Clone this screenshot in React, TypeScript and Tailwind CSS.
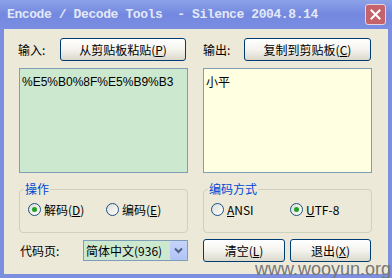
import type { ReactNode } from 'react';

const CJK = "font-['Noto_Sans_CJK_SC','Liberation_Sans',sans-serif]";

function XPButton({ children, className = '' }: { children: ReactNode; className?: string }) {
  return (
    <button
      type="button"
      className={`flex items-center justify-center rounded-[3px] border border-[#003c74] bg-gradient-to-b from-white via-[#f4f3ee] to-[#dcd9cb] text-[12px] leading-none text-black ${className}`}
    >
      {children}
    </button>
  );
}

function Radio({ checked, label, hotkey, rest }: { checked?: boolean; label: string; hotkey: string; rest: string }) {
  return (
    <label className="flex items-center gap-[3px] text-[12px] leading-none text-black">
      <span className="flex h-[13px] w-[13px] items-center justify-center rounded-full border border-[#1c5180] bg-gradient-to-br from-[#dcdcd6] to-white">
        {checked ? <span className="h-[5px] w-[5px] rounded-full bg-[#21a121]" /> : null}
      </span>
      <span>
        {label}
        <span className="underline">{hotkey}</span>
        {rest}
      </span>
    </label>
  );
}

function Group({ title, children }: { title: string; children: ReactNode }) {
  return (
    <fieldset className="h-[51px] rounded-[4px] border border-[#d0d0bf] px-[4px] pt-[7px]">
      <legend className="px-[1px] text-[12px] leading-[14px] text-[#0046d5]">{title}</legend>
      <div className="flex items-center">{children}</div>
    </fieldset>
  );
}

export default function App() {
  return (
    <div className={`relative flex h-[278px] w-[392px] flex-col overflow-hidden bg-[#7b8ee0] ${CJK}`}>
      <div className="flex h-[29px] shrink-0 items-center justify-between bg-gradient-to-b from-[#8da2e8] via-[#7388df] to-[#7a8fe2] pl-[7px] pr-[6px]">
        <span className="whitespace-pre font-['Liberation_Mono',monospace] text-[13px] font-bold tracking-[-0.4px] text-[#e3e8f8]">
          Encode / Decode Tools  - Silence 2004.8.14
        </span>
        <span className="flex h-[21px] w-[21px] items-center justify-center rounded-[3px] border border-[#e8d4e0] bg-[#c4636a]">
          <svg width="11" height="11" viewBox="0 0 11 11">
            <path d="M1.5 1.5 L9.5 9.5 M9.5 1.5 L1.5 9.5" stroke="#fff" strokeWidth="2" strokeLinecap="square" />
          </svg>
        </span>
      </div>

      <div className="mx-[4px] mb-[4px] flex-1 bg-[#ece9d8] px-[15px] pt-[9px]">
        <div className="grid grid-cols-[169px_169px] gap-x-[15px]">
          <div className="flex flex-col">
            <div className="flex h-[23px] items-center justify-between">
              <span className="ml-[-1px] text-[12px]">输入:</span>
              <XPButton className="mr-[2px] h-[23px] w-[126px]">
                从剪贴板粘贴(<span className="underline">P</span>)
              </XPButton>
            </div>
            <div className="mt-[7px] h-[105px] border border-[#7f9db9] bg-[#cce8cf] px-[2px] pt-[6px] font-['Liberation_Sans',sans-serif] text-[12px] leading-[15px] text-black">
              %E5%B0%8F%E5%B9%B3
            </div>
            <div className="mt-[9px]">
              <Group title="操作">
                <div className="w-[82px] pl-[4px]">
                  <Radio checked label="解码(" hotkey="D" rest=")" />
                </div>
                <Radio label="编码(" hotkey="E" rest=")" />
              </Group>
            </div>
            <div className="mt-[6px] flex h-[23px] items-center justify-between">
              <span className="ml-[1px] text-[12px]">代码页:</span>
              <div className="flex h-[21px] w-[105px] items-center border border-[#7f9db9] bg-[#cce8cf] pl-[2px]">
                <span className="flex-1 text-[12px] leading-none">简体中文(936)</span>
                <span className="flex h-[19px] w-[17px] items-center justify-center rounded-[2px] bg-gradient-to-b from-[#c6d4fb] to-[#b0c4f5]">
                  <svg width="9" height="7" viewBox="0 0 9 7">
                    <path d="M1 1.5 L4.5 5 L8 1.5" stroke="#4d6185" strokeWidth="2" fill="none" />
                  </svg>
                </span>
              </div>
            </div>
          </div>

          <div className="flex flex-col">
            <div className="flex h-[23px] items-center justify-between">
              <span className="text-[12px]">输出:</span>
              <XPButton className="mr-[1px] h-[23px] w-[127px]">
                复制到剪贴板(<span className="underline">C</span>)
              </XPButton>
            </div>
            <div className="mt-[7px] h-[105px] border border-[#7f9db9] bg-[#ffffe1] px-[2px] pt-[5px] text-[12px] leading-[15px] text-black">
              小平
            </div>
            <div className="mt-[9px]">
              <Group title="编码方式">
                <div className="w-[82px] pl-[3px]">
                  <Radio label="" hotkey="A" rest="NSI" />
                </div>
                <Radio checked label="" hotkey="U" rest="TF-8" />
              </Group>
            </div>
            <div className="mt-[6px] flex h-[23px] items-center gap-[5px]">
              <XPButton className="h-[23px] w-[82px]">
                清空(<span className="underline">L</span>)
              </XPButton>
              <XPButton className="h-[23px] w-[81px]">
                退出(<span className="underline">X</span>)
              </XPButton>
            </div>
          </div>
        </div>
      </div>

      <span className="pointer-events-none absolute left-[255px] top-[260px] font-['Liberation_Sans',sans-serif] text-[18px] leading-none text-[#767676]">
        www.wooyun.org
      </span>
    </div>
  );
}
